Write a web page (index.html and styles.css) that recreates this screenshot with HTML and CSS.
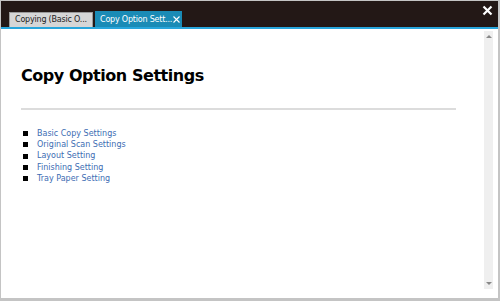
FILE: index.html
```html
<!DOCTYPE html>
<html lang="en">
<head>
    <meta charset="UTF-8">
    <title>Copy Option Settings</title>
    <link rel="stylesheet" href="styles.css">
</head>
<body>
    <div class="window">
        <header class="titlebar">
            <div class="tabs">
                <div class="tab">Copying (Basic O...</div>
                <div class="tab tab-active">
                    <span>Copy Option Sett...</span>
                    <svg class="tab-close" width="7" height="7" viewBox="0 0 7 7">
                        <path d="M0.5 0.5L6.5 6.5M6.5 0.5L0.5 6.5" stroke="#fff" stroke-width="1.1"></path>
                    </svg>
                </div>
            </div>
            <svg class="window-close" width="11" height="11" viewBox="0 0 11 11">
                <path d="M1.5 1.5L9.5 9.5M9.5 1.5L1.5 9.5" stroke="#fff" stroke-width="2.2"></path>
            </svg>
        </header>

        <div class="body">
            <main class="content">
                <h1 class="page-title">Copy Option Settings</h1>
                <hr class="divider">
                <ul class="link-list">
                    <li><a href="#">Basic Copy Settings</a></li>
                    <li><a href="#">Original Scan Settings</a></li>
                    <li><a href="#">Layout Setting</a></li>
                    <li><a href="#">Finishing Setting</a></li>
                    <li><a href="#">Tray Paper Setting</a></li>
                </ul>
            </main>
            <div class="scrollbar">
                <span class="arrow arrow-up"></span>
                <span class="arrow arrow-down"></span>
            </div>
        </div>
    </div>
</body>
</html>
```

FILE: styles.css
```css
* {
    box-sizing: border-box;
    margin: 0;
    padding: 0;
}

body {
    font-family: 'DejaVu Sans', Verdana, sans-serif;
    background: #c4c4c4;
    width: 500px;
    height: 301px;
    overflow: hidden;
}

.window {
    width: 497px;
    height: 297px;
    margin-left: 1px;
    margin-top: 1px;
    background: #fff;
    display: flex;
    flex-direction: column;
}

.titlebar {
    height: 28px;
    background: #231816;
    border-bottom: 2px solid #28a6dc;
    display: flex;
    justify-content: space-between;
    align-items: flex-start;
    padding-left: 8px;
}

.tabs {
    display: flex;
    align-items: flex-end;
    align-self: flex-end;
    gap: 2px;
}

.tab {
    height: 15px;
    padding: 0 4px 0 5px;
    width: 84px;
    background: #d6d6d6;
    border: 1px solid #9a9a9a;
    border-bottom: none;
    color: #222;
    font-size: 8px;
    letter-spacing: -0.2px;
    line-height: 14px;
    white-space: nowrap;
    overflow: hidden;
}

.tab-active {
    height: 16px;
    width: 87px;
    background: #1a8bb6;
    border-color: #1a8bb6;
    color: #fff;
    line-height: 16px;
    display: flex;
    align-items: center;
    padding: 0 2px 0 4px;
}

.tab-close {
    margin-left: 1px;
    flex-shrink: 0;
}

.window-close {
    margin: 4px 5px 0 0;
}

.body {
    flex: 1;
    display: flex;
}

.content {
    flex: 1;
    padding: 37px 28px 0 20px;
}

.page-title {
    font-size: 16px;
    letter-spacing: -0.45px;
    font-weight: bold;
    color: #000;
    line-height: 20px;
}

.divider {
    border: none;
    border-top: 2px solid #dcdcdc;
    margin: 22px 0 18px;
}

.link-list {
    list-style: none;
    padding-left: 2px;
}

.link-list li {
    font-size: 8px;
    line-height: 11.2px;
    display: flex;
    align-items: center;
}

.link-list li::before {
    content: "";
    width: 5px;
    height: 5px;
    background: #000;
    margin-right: 9px;
}

.link-list a {
    color: #3d6db3;
    text-decoration: none;
}

.scrollbar {
    width: 9px;
    margin: 2px 5px 9px 0;
    background: #efefef;
    display: flex;
    flex-direction: column;
    justify-content: space-between;
    align-items: center;
    padding: 4px 0;
}

.arrow {
    width: 0;
    height: 0;
    border-left: 3px solid transparent;
    border-right: 3px solid transparent;
}

.arrow-up {
    border-bottom: 3px solid #888;
}

.arrow-down {
    border-top: 3px solid #888;
}
```
